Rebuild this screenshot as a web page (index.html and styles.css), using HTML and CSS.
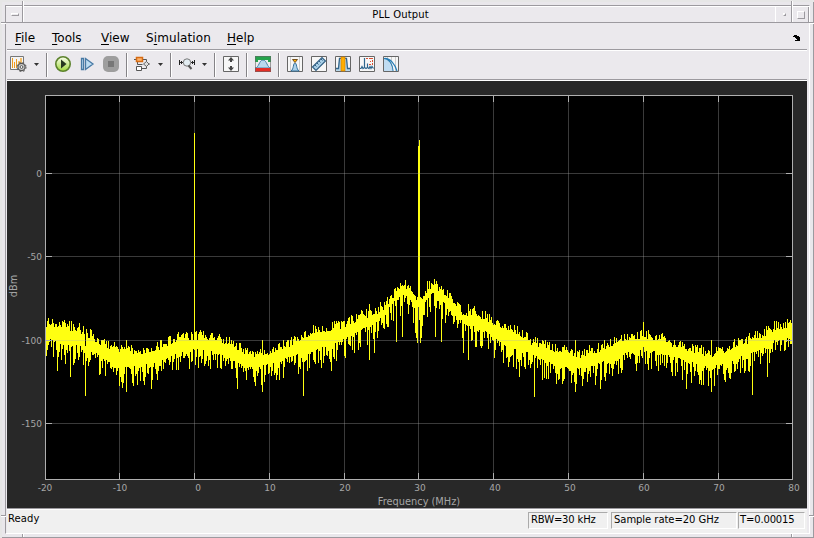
FILE: index.html
```
<!DOCTYPE html>
<html>
  <head>
    <meta charset="utf-8">
    <title>PLL Output</title>
    <link rel="stylesheet" href="styles.css">
  </head>
  <body>
    <div class="window">
      <div class="frame">
        <div class="titlebar">
          <div class="title-button"><span class="dash"></span></div>
          <div class="title">PLL Output</div>
          <div class="title-button small"><span class="dot"></span></div>
          <div class="title-button last"><span class="square"></span></div>
        </div>
        <div class="content">
          <div class="menubar">
            <span class="menu file"><u>F</u>ile</span>
            <span class="menu tools"><u>T</u>ools</span>
            <span class="menu view"><u>V</u>iew</span>
            <span class="menu simulation">S<u>i</u>mulation</span>
            <span class="menu help"><u>H</u>elp</span>
            <svg class="dock" width="8" height="6"><path d="M1 0h3v1h2v1h1v4H2V5h2V4H3V3H2V2H0V1h1z"/></svg>
          </div>
          <div class="toolbar">
            <svg class="icon" viewBox="0 0 24 24">
              <path d="M3.5 4.5h13v13h-13z" fill="#f4f4f4" stroke="#777"/>
              <path d="M5.5 6v10M7.5 10v6M9.500 7v9" stroke="#ef9a1c"/>
              <path d="M12 9v6M14 6v8" stroke="#f5a11c" stroke-width="1.3"/>
              <circle cx="14.5" cy="15" r="3.6" fill="#ccc" stroke="#555" stroke-width="1.2"/>
              <circle cx="14.5" cy="15" r="4.5" fill="none" stroke="#666" stroke-width="1.1" stroke-dasharray="1.8 1.8"/>
              <circle cx="14.5" cy="15" r="1.4" fill="#fff" stroke="#555"/>
            </svg>
            <svg class="arrow" viewBox="0 0 12 24"><path d="M3 11h5l-2.5 3z"/></svg>
            <i class="sep"></i>
            <svg class="icon" viewBox="0 0 24 24">
              <defs><linearGradient id="run" x2="0" y2="1"><stop stop-color="#fbfff0"/><stop offset="1" stop-color="#a0d83c"/></linearGradient></defs>
              <circle cx="12" cy="12" r="7.2" fill="url(#run)" stroke="#5c822c" stroke-width="1.6"/>
              <path d="M10 7.5l5.5 4.5-5.5 4.5z" fill="#263820"/>
            </svg>
            <svg class="icon" viewBox="0 0 24 24">
              <path d="M6.5 6.5h2v11h-2zM10.5 6.5l7.5 5.5-7.5 5.5z" fill="#bcdcf2" stroke="#4779a4" stroke-width="1.3"/>
            </svg>
            <svg class="icon" viewBox="0 0 24 24">
              <rect x="4" y="4" width="16" height="16" rx="5" fill="#9e9e9e"/>
              <path d="M9 9h6v6H9z" fill="#777"/>
            </svg>
            <i class="sep"></i>
            <svg class="icon" viewBox="0 0 24 24">
              <path d="M3 7.500h12.500v3M6.500 10v2.500h5M7 16.500h8.500v-3" fill="none" stroke="#555"/>
              <path d="M5.500 5.500h6v4h-6z" fill="#ffb36b" stroke="#d66b13" stroke-width="1.500"/>
              <path d="M5.500 14.500h5v4h-5z" fill="#fff" stroke="#555"/>
              <path d="M12.500 12l3-2.500 2.500 2.500-2.500 2.500zM17 12h2" fill="#ddd" stroke="#666"/>
            </svg>
            <svg class="arrow" viewBox="0 0 12 24"><path d="M3 11h5l-2.500 3z"/></svg>
            <i class="sep"></i>
            <svg class="icon" viewBox="0 0 24 24">
              <path d="M4.500 8v5M19.500 8v5M5 10.500h3M16 10.500h3M6.500 9v3M17.500 9v3" stroke="#222"/>
              <circle cx="12" cy="10.500" r="3.700" fill="#e3edf2" stroke="#777"/>
              <path d="M13.500 13.500l3 3.500" stroke="#555" stroke-width="2"/>
            </svg>
            <svg class="arrow" viewBox="0 0 12 24"><path d="M3 11h5l-2.500 3z"/></svg>
            <i class="sep"></i>
            <svg class="icon" viewBox="0 0 24 24">
              <path class="tile" d="M4.500 4.500h15v15h-15z"/>
              <path d="M12 5l3 3.500h-2V10h-2V8.500H9zM12 19l3-3.500h-2V14h-2v1.500H9z" fill="#444"/>
            </svg>
            <i class="sep"></i>
            <svg class="icon" viewBox="0 0 24 24">
              <path d="M4 4h16v16H4z" fill="#eee"/>
              <path d="M4 16c4 0 4-8 8-8s4 8 8 8z" fill="#b9d9ee" stroke="#4d83aa"/>
              <path d="M4 4h16v6h-3V8H7v2H4z" fill="#25a34c"/>
              <path d="M4 16h16v4H4z" fill="#e42e26"/>
              <path d="M4.500 4.500h15v15h-15z" fill="none" stroke="#666" stroke-opacity=".6"/>
            </svg>
            <i class="sep"></i>
            <svg class="icon" viewBox="0 0 24 24">
              <path class="tile" d="M4.500 4.500h15v15h-15z"/>
              <path class="rule" d="M7.500 5v14M16.500 5v14"/>
              <path d="M8 19c3-2 2-8 4-8s1 6 4 8z" fill="#acd2eb" stroke="#34709b"/>
              <path d="M9.500 7.500h5L12 10.500z" fill="#ffb000" stroke="#76501c"/>
            </svg>
            <svg class="icon" viewBox="0 0 24 24">
              <path class="tile" d="M4.500 4.500h15v15h-15z"/>
              <path d="M5.500 15L15 5.500l3.500 3.500L9 18.500z" fill="#a9d0e8" stroke="#315f83" stroke-width="1.200"/>
              <path d="M8 13l1.500 1.500M10 11l1.500 1.500M12 9l1.500 1.500M14 7l1.500 1.500" stroke="#315f83"/>
            </svg>
            <svg class="icon" viewBox="0 0 24 24">
              <path class="tile" d="M4.500 4.500h15v15h-15z"/>
              <path d="M5 19v-2h2l1-9h3v11zM14 8h2l1 9h2v2h-5z" fill="#b8d7e9"/>
              <path d="M5 16.500h2.500l1-10h7l1 10H19" fill="none" stroke="#32658c" stroke-width="1.300"/>
              <path d="M10 5h4v14h-4z" fill="#ffae00" stroke="#d38300" stroke-width=".7"/>
            </svg>
            <svg class="icon" viewBox="0 0 24 24">
              <path class="tile" d="M4.500 4.500h15v15h-15z"/>
              <path d="M5 16.500h1l1-2 1 2 1.500-1V6v9.500l1.500 1 1.500-1v-4 4l1.500 1 1-2 1 2 1-2 1.500 2" fill="none" stroke="#2d658e" stroke-width="1.200"/>
              <path d="M11 6.500h2M14 6.500h4M17.500 8v2M15 9.500h1M17.500 11v2M14 12.500h2" stroke="#d85032"/>
            </svg>
            <svg class="icon" viewBox="0 0 24 24">
              <path class="tile" d="M4.500 4.500h15v15h-15z"/>
              <path class="rule" d="M8.500 5v14M12.500 5v14M16.500 5v14"/>
              <path d="M5 7c5 1 7 5 8 12H5z" fill="#c0dcf2"/>
              <path d="M5 6.500c5 .5 9 6 9 12.500M5 6.500c6-1 11 6 13 12.500" fill="none" stroke="#277eb5" stroke-width="1.200"/>
            </svg>
          </div>
          <svg class="plot" id="plot" viewBox="7 81 800 427"></svg>
          <div class="statusbar">
            <span class="ready">Ready</span>
            <span class="field rbw">RBW=30 kHz</span>
            <span class="field rate">Sample rate=20 GHz</span>
            <span class="field time">T=0.00015</span>
          </div>
        </div>
      </div>
      <!-- resize handle notches -->
      <svg class="notches" width="814" height="538" shape-rendering="crispEdges">
        <path d="M22.500 1v21M791.500 1v21M1 22.500h5M809 22.500h5M1 515.500h5M809 515.500h5M22.500 534v4M791.500 534v4M2 537.500h812M813.500 2v536" stroke="#9c9a9f"/>
        <path d="M23.500 1v21M792.500 1v21M1 23.500h5M809 23.500h5M1 516.500h5M809 516.500h5M23.500 534v3M792.500 534v3" stroke="#fff"/>
      </svg>
    </div>
    <script src="plot.js"></script>
  </body>
</html>
```
FILE: styles.css
```
body{
  margin: 0;
  background: #e6e6e6;
  font: 10px "DejaVu Sans", Verdana, sans-serif;
  color: #000;
}
.window{
  position: relative;
  box-sizing: border-box;
  width: 814px;
  height: 538px;
  padding: 5px 4px 4px 5px;
  background: #e9e7eb;
  box-shadow: inset 0 2px #e6e6e6, inset 2px 0 #e6e6e6;
}
.notches{
  position: absolute;
  top: 0;
  left: 0;
}
.frame{
  box-sizing: border-box;
  height: 529px;
  border: 1px solid #fff;
  border-top-color: #9c9a9f;
  border-left-color: #9c9a9f;
  background: #ebe9ed;
}
.titlebar{
  display: flex;
  box-sizing: border-box;
  height: 17px;
  border-top: 1px solid #fff;
  border-bottom: 1px solid #9c9a9f;
}
.title-button{
  display: flex;
  box-sizing: border-box;
  width: 17px;
  align-items: center;
  justify-content: center;
  border-left: 1px solid #fff;
}
.title-button:first-child{
  border-left: none;
}
.title-button.last{
  border-right: 1px solid #9c9a9f;
}
.title{
  flex: 1;
  text-align: center;
  line-height: 16px;
  letter-spacing: 0.15px;
  padding-left: 3px;
}
.dash, .dot, .square{
  box-sizing: border-box;
  border: 1px solid #fff;
  border-right-color: #9c9a9f;
  border-bottom-color: #9c9a9f;
}
.dash{
  width: 8px;
  height: 3px;
}
.dot{
  width: 3px;
  height: 3px;
}
.square{
  width: 8px;
  height: 8px;
}
.content{
  width: 800px;
  margin-left: 1px;
}
.menubar{
  display: flex;
  box-sizing: border-box;
  height: 27px;
  padding: 0 6px 0 8px;
  border-bottom: 1px solid #9c9a9f;
  font-size: 12px;
  line-height: 30px;
}
.menu u{
  text-underline-offset: 2px;
}
.file{
  width: 37px;
}
.tools{
  width: 49px;
}
.view{
  width: 45px;
}
.simulation{
  width: 81px;
  letter-spacing: 0.1px;
}
.dock{
  margin: 12px 0 0 auto;
}
.toolbar{
  display: flex;
  box-sizing: border-box;
  height: 30px;
  padding-top: 1px;
  border-top: 1px solid #fff;
  border-bottom: 1px solid #9c9a9f;
  box-shadow: 0 1px #fff;
}
.icon{
  width: 24px;
  height: 24px;
}
.arrow{
  width: 12px;
  height: 24px;
  fill: #333;
}
.sep{
  box-sizing: border-box;
  width: 2px;
  height: 24px;
  margin: 1px 3px 0;
  border-left: 1px solid #858387;
  border-right: 1px solid #fff;
}
.icon, .arrow{
  flex: none;
}
.tile{
  fill: #f7f7f7;
  stroke: #666;
}
.rule{
  stroke: #ccc;
}
.plot{
  display: block;
  width: 800px;
  height: 427px;
  margin-top: 1px;
  background: #282828;
}
.plot text{
  fill: #a6a6a6;
  font-size: 9px;
}
.plot .axis-title{
  font-size: 9.8px;
}
.trace{
  stroke: #ffff11;
  fill: none;
}
.grid{
  stroke: #afafaf;
  stroke-opacity: 0.33;
  fill: none;
}
.axes{
  stroke: #afafaf;
  fill: none;
}
.statusbar{
  display: flex;
  box-sizing: border-box;
  height: 25px;
  padding: 3px 2px 0 1px;
  border-top: 1px solid #9c9a9f;
  box-shadow: inset 0 1px #fff;
  background: #f0f0f0;
}
.ready{
  flex: 1;
  line-height: 14px;
  letter-spacing: 0.1px;
}
.field{
  box-sizing: border-box;
  height: 17px;
  padding-left: 2px;
  line-height: 14px;
  letter-spacing: -0.15px;
  white-space: nowrap;
  border: 1px solid #fff;
  border-top-color: #aaa;
  border-left-color: #aaa;
}
.rbw{
  width: 80px;
  margin-right: 3px;
}
.rate{
  width: 126px;
  margin-right: 1px;
  letter-spacing: -0.05px;
}
.time{
  width: 67px;
  padding-left: 1px;
}
```
FILE: plot.js
```
const plot = document.getElementById('plot')

// x, upper edge and lower edge of the noise band
const band = [
  [45, 326, 337], [60, 328, 345], [80, 332, 346], [100, 344, 356],
  [119, 353, 368], [140, 354, 367], [160, 349, 361], [180, 339, 353],
  [194, 339, 350], [215, 339, 352], [230, 346, 359], [240, 351, 365],
  [255, 357, 369], [270, 354, 364], [285, 348, 359], [300, 342, 354],
  [312, 333, 352], [325, 331, 347], [340, 329, 342], [360, 319, 331],
  [375, 315, 322], [385, 307, 313], [392, 299, 304], [403, 288, 295],
  [410, 288, 298], [414, 295, 309], [416, 302, 322], [419, 303, 320],
  [421, 302, 320], [423, 298, 308], [427, 290, 297], [433, 287, 293],
  [440, 291, 299], [450, 299, 311], [458, 310, 319], [465, 318, 323],
  [475, 314, 327], [485, 320, 332], [493, 325, 338], [505, 330, 347],
  [520, 335, 350], [530, 344, 354], [545, 348, 362], [568, 355, 369],
  [580, 357, 369], [590, 354, 367], [605, 349, 361], [625, 341, 353],
  [643, 338, 350], [660, 340, 352], [675, 347, 358], [690, 352, 363],
  [711, 356, 368], [725, 352, 363], [740, 345, 356], [760, 338, 351],
  [775, 330, 343], [792, 326, 335]
]

// single columns that stand out of the band
const spikes = {
  57: [327, 371], 63: [322, 345], 70: [331, 377], 85: [346, 396], 126: [340, 392], 151: [348, 389],
  194: [133, 350], 237: [350, 389], 262: [340, 392], 303: [338, 396],
  331: [330, 371], 369: [304, 360], 374: [314, 353], 396: [291, 342],
  402: [285, 337], 416: [300, 338], 417: [297, 343], 418: [146, 307],
  419: [140, 320], 420: [297, 343], 421: [298, 338], 435: [284, 337],
  441: [286, 342], 463: [314, 353], 468: [304, 360], 519: [332, 377],
  534: [342, 397], 575: [340, 392], 600: [350, 389], 643: [322, 347],
  686: [349, 389], 711: [340, 392], 752: [337, 395], 767: [330, 377],
  774: [321, 340]
}

let seed = 30
function random() {
  seed = (seed * 16807) % 2147483647
  return seed / 2147483647
}

function add(name, attrs, text) {
  const el = document.createElementNS('http://www.w3.org/2000/svg', name)
  for (const key in attrs) {
    el.setAttribute(key, attrs[key])
  }
  if (text) {
    el.textContent = text
  }
  plot.appendChild(el)
}

function bandAt(x) {
  let i = 0
  while (band[i + 1][0] < x) {
    i++
  }
  const a = band[i]
  const b = band[i + 1]
  const t = (x - a[0]) / (b[0] - a[0])
  return [a[1] + (b[1] - a[1]) * t, a[2] + (b[2] - a[2]) * t]
}

let trace = ''
for (let x = 46; x < 792; x++) {
  let [top, bottom] = bandAt(x)
  top = Math.round(top + 1 - Math.pow(random(), 1.3) * 10)
  bottom = Math.round(bottom - 1 + Math.pow(random(), 1.8) * 21)
  if (spikes[x]) {
    [top, bottom] = spikes[x]
  }
  trace += `M${x + 0.5} ${top}V${bottom}`
}

const xs = [45, 119, 194, 269, 344, 418, 493, 568, 643, 718, 792]
const ys = [173, 256, 340, 423]
let columns = ''
let rows = ''
let axes = 'M45.5 95.5H792.5V479.5H45.5z'
for (const x of xs.slice(1, -1)) {
  columns += `M${x + 0.5} 96V479`
  axes += `M${x + 0.5} 96v6M${x + 0.5} 473v6`
}
for (const y of ys) {
  rows += `M46 ${y + 0.5}H792`
  axes += `M46 ${y + 0.5}h6M786 ${y + 0.5}h6`
}

add('rect', { x: 45, y: 95, width: 748, height: 385, fill: '#000' })
add('path', { class: 'grid', d: columns, 'shape-rendering': 'crispEdges' })
add('path', { class: 'trace', d: trace, 'shape-rendering': 'crispEdges' })
add('path', { class: 'grid', d: rows, 'shape-rendering': 'crispEdges' })
add('path', { class: 'axes', d: axes, 'shape-rendering': 'crispEdges' })

const labelX = [45, 120, 198, 270, 345, 420, 495, 570, 644, 719, 794]
labelX.forEach((x, i) => {
  add('text', { x: x, y: 491, 'text-anchor': 'middle' }, String(i * 10 - 20))
})
ys.forEach((y, i) => {
  add('text', { x: 42, y: y + 3.5, 'text-anchor': 'end' }, String(i * -50 || 0))
})
add('text', { class: 'axis-title', x: 419, y: 505, 'text-anchor': 'middle' }, 'Frequency (MHz)')
add('text', { class: 'axis-title', x: 17, y: 286, 'text-anchor': 'middle', transform: 'rotate(-90 17 286)' }, 'dBm')
```
